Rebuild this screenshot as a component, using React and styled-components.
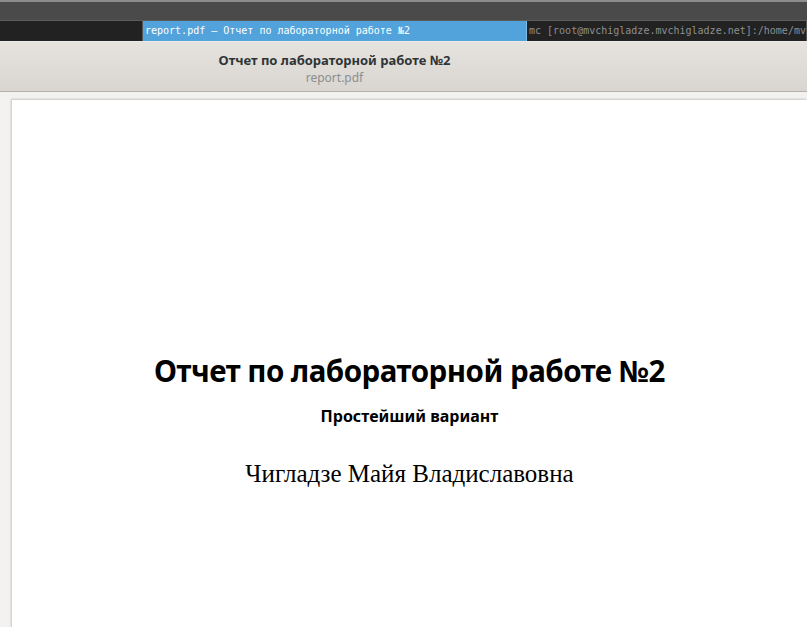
import React from 'react';
import styled, { createGlobalStyle } from 'styled-components';

const GlobalStyle = createGlobalStyle`
  html, body {
    margin: 0;
    padding: 0;
    width: 100%;
    height: 100%;
    overflow: hidden;
    background: #f3f2f0;
  }
  #root {
    height: 100%;
  }
`;

const Screen = styled.div`
  width: 807px;
  height: 627px;
  display: flex;
  flex-direction: column;
  overflow: hidden;
`;

const TopStrip = styled.div`
  height: 18px;
  flex: none;
  background: #4a4a4a;
  border-top: 2px solid #8c8c8c;
`;

const TabBar = styled.div`
  height: 22px;
  flex: none;
  display: flex;
  background: #222222;
  border-top: 1px solid #5c5c5c;
  border-bottom: 1px solid #e9e9e9;
  box-sizing: border-box;
`;

const Tab = styled.div`
  width: ${p => (p.width ? `${p.width}px` : 'auto')};
  flex: ${p => (p.width ? 'none' : '1')};
  min-width: 0;
  box-sizing: border-box;
  padding-left: 2px;
  background: ${p => (p.active ? '#52a3db' : '#222222')};
  color: ${p => (p.active ? '#ffffff' : '#8f8f8f')};
  border-right: 1px solid ${p => (p.active ? '#7cbbe6' : '#555555')};
  font-family: 'DejaVu Sans Mono', 'Liberation Mono', monospace;
  font-size: 10px;
  line-height: 20px;
  white-space: nowrap;
  overflow: hidden;
`;

const HeaderBar = styled.header`
  height: 50px;
  flex: none;
  box-sizing: border-box;
  background: linear-gradient(#e6e3df, #d9d5d0);
  border-bottom: 1px solid #b5afa7;
  display: flex;
`;

const TitleBlock = styled.div`
  width: 669px;
  display: flex;
  flex-direction: column;
  align-items: center;
  padding-top: 9px;
  font-family: 'Noto Sans', 'Open Sans', sans-serif;
`;

const WindowTitle = styled.div`
  font-size: 13px;
  font-weight: 700;
  color: #2e3436;
  line-height: 18px;
`;

const WindowSubtitle = styled.div`
  font-size: 12px;
  color: #8b8e8f;
  line-height: 16px;
  margin-top: 1px;
`;

const Viewer = styled.main`
  flex: 1;
  background: #f3f2f0;
  padding: 8px 0 0 12px;
  overflow: hidden;
`;

const Page = styled.section`
  width: 795px;
  height: 620px;
  background: #ffffff;
  box-shadow: -1px -1px 2px rgba(0, 0, 0, 0.18);
  display: flex;
  flex-direction: column;
  align-items: center;
  padding-top: 250px;
  box-sizing: border-box;
`;

const DocTitle = styled.h1`
  margin: 0;
  font-family: 'Noto Sans', 'Open Sans', sans-serif;
  font-size: 29.5px;
  font-weight: 700;
  color: #000000;
  letter-spacing: -0.5px;
  line-height: 42px;
`;

const DocSubtitle = styled.h2`
  margin: 13px 0 0;
  font-family: 'Noto Sans', 'Open Sans', sans-serif;
  font-size: 16px;
  font-weight: 700;
  color: #000000;
  line-height: 22px;
`;

const Author = styled.p`
  margin: 32px 0 0;
  font-family: 'Liberation Serif', 'DejaVu Serif', serif;
  font-size: 25px;
  color: #000000;
  line-height: 30px;
`;

export default function App() {
  return (
    <>
      <GlobalStyle />
      <Screen>
        <TopStrip />
        <TabBar>
          <Tab width={143} />
          <Tab width={384} active>report.pdf — Отчет по лабораторной работе №2</Tab>
          <Tab>mc [root@mvchigladze.mvchigladze.net]:/home/mvchigladze</Tab>
        </TabBar>
        <HeaderBar>
          <TitleBlock>
            <WindowTitle>Отчет по лабораторной работе №2</WindowTitle>
            <WindowSubtitle>report.pdf</WindowSubtitle>
          </TitleBlock>
        </HeaderBar>
        <Viewer>
          <Page>
            <DocTitle>Отчет по лабораторной работе №2</DocTitle>
            <DocSubtitle>Простейший вариант</DocSubtitle>
            <Author>Чигладзе Майя Владиславовна</Author>
          </Page>
        </Viewer>
      </Screen>
    </>
  );
}
